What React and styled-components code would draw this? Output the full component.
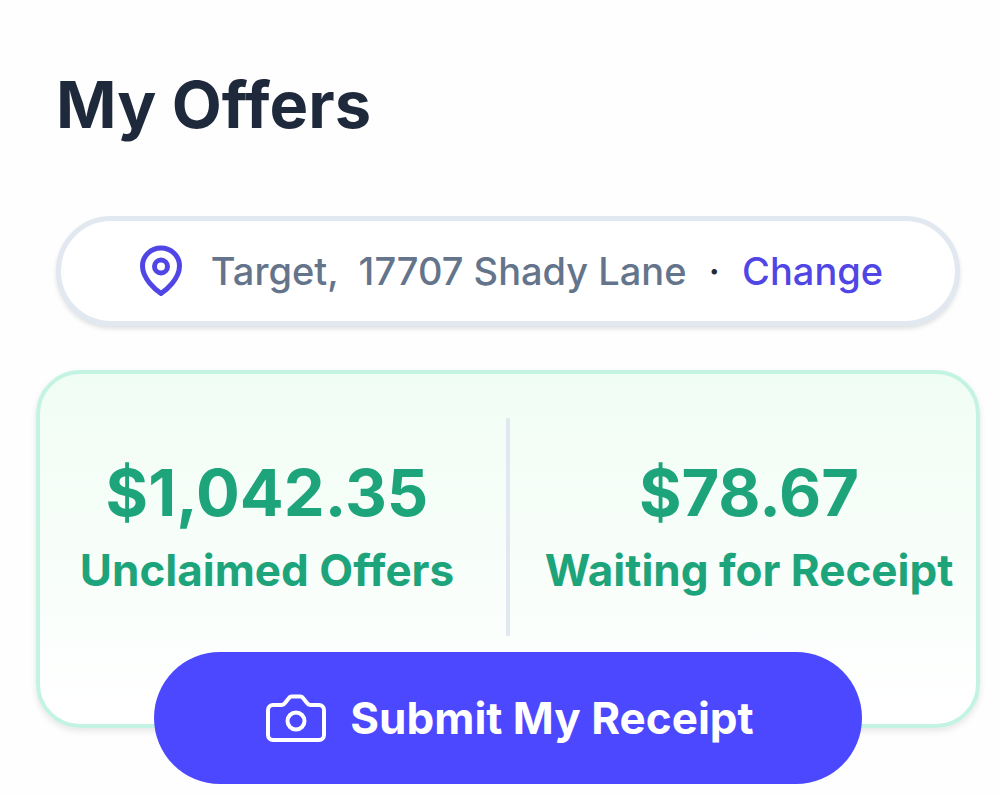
import React from "react";
import styled, { createGlobalStyle } from "styled-components";

const GlobalStyle = createGlobalStyle`
  * {
    box-sizing: border-box;
  }
  body {
    margin: 0;
    background: #fefefe;
    font-family: Inter, sans-serif;
  }
`;

const Page = styled.main`
  min-height: 100vh;
  padding: 64px 20px 68px 36px;
`;
const Title = styled.h1`
  margin: 0 0 70px;
  padding: 0 20px;
  font-size: 65px;
  line-height: 82px;
  font-weight: 700;
  color: #1e293b;
`;
const LocationBar = styled.div`
  display: flex;
  align-items: center;
  justify-content: center;
  height: 110px;
  margin: 0 20px 44px;
  padding-left: 6px;
  border: 5px solid #e2e8f0;
  border-radius: 56px;
  background: #fff;
  box-shadow: 0 3px 4px rgba(15, 23, 42, 0.12);
  font-size: 38px;
  line-height: 48px;
  font-weight: 500;
  color: #64748b;
`;
const PinIcon = styled.svg`
  width: 44px;
  height: 52px;
  margin-right: 28px;
  flex-shrink: 0;
`;
const Address = styled.span`
  white-space: pre;
`;
const Dot = styled.span`
  margin: 0 22px;
  color: #1e293b;
`;
const ChangeLink = styled.a`
  color: #4f46e5;
  text-decoration: none;
`;
const Card = styled.section`
  display: flex;
  flex-direction: column;
  align-items: center;
  padding-top: 44px;
  border: 4px solid #c3f3e3;
  border-radius: 44px;
  background: linear-gradient(#f0fdf4, #fff);
  box-shadow: 0 3px 6px rgba(15, 23, 42, 0.1);
`;
const Stats = styled.div`
  display: flex;
  width: 100%;
  height: 218px;
`;
const Divider = styled.div`
  width: 4px;
  margin: 0 12px;
  background: #e2e8f0;
`;
const Stat = styled.div`
  flex: 1 1 0;
  padding-top: 32px;
  text-align: center;
  white-space: nowrap;
  color: #1ea47a;
`;
const Amount = styled.div`
  font-size: 65px;
  line-height: 86px;
  font-weight: 700;
`;
const Label = styled.div`
  font-size: 44px;
  line-height: 68px;
  font-weight: 700;
`;
const SubmitButton = styled.button`
  display: flex;
  align-items: center;
  height: 132px;
  margin: 16px 0 -60px;
  padding: 0 108px 0 112px;
  border: 0;
  border-radius: 66px;
  background: #4b48ff;
  color: #fff;
  font: 700 44px Inter, sans-serif;
  white-space: nowrap;
  cursor: pointer;
`;
const CameraIcon = styled.svg`
  width: 60px;
  height: 50px;
  margin-right: 24px;
`;

const stats = [
  { amount: "$1,042.35", label: "Unclaimed Offers" },
  { amount: "$78.67", label: "Waiting for Receipt" },
];

export default function App() {
  return (
    <>
      <GlobalStyle />
      <Page>
        <Title>My Offers</Title>
        <LocationBar>
          <PinIcon viewBox="0 0 44 52" fill="none" stroke="#4f46e5" strokeWidth="5">
            <path
              d="M22 48.5C17 45 3.500 34 3.500 21a18.500 18 0 0 1 37 0C40.500 34 27 45 22 48.5Z"
              strokeLinejoin="round"
            />
            <circle cx="22" cy="21.500" r="6.500" />
          </PinIcon>
          <Address>{"Target,  17707 Shady Lane"}</Address>
          <Dot>·</Dot>
          <ChangeLink href="#change">Change</ChangeLink>
        </LocationBar>
        <Card>
          <Stats>
            {stats.map((s, i) => (
              <React.Fragment key={s.label}>
                {i > 0 && <Divider />}
                <Stat>
                  <Amount>{s.amount}</Amount>
                  <Label>{s.label}</Label>
                </Stat>
              </React.Fragment>
            ))}
          </Stats>
          <SubmitButton type="button">
            <CameraIcon viewBox="0 0 60 50" fill="none" stroke="#fff" strokeWidth="4">
              <path
                d="M7 12h8c2 0 3-.5 4-2l4-5c.7-1 1.200-1.500 2.500-1.500h9c1.300 0 1.800.5 2.500 1.500l4 5c1 1.500 2 2 4 2H53a5 5 0 0 1 5 5v25a5 5 0 0 1-5 5H7a5 5 0 0 1-5-5V17a5 5 0 0 1 5-5Z"
                strokeLinejoin="round"
              />
              <circle cx="30" cy="28" r="8.500" />
            </CameraIcon>
            Submit My Receipt
          </SubmitButton>
        </Card>
      </Page>
    </>
  );
}
